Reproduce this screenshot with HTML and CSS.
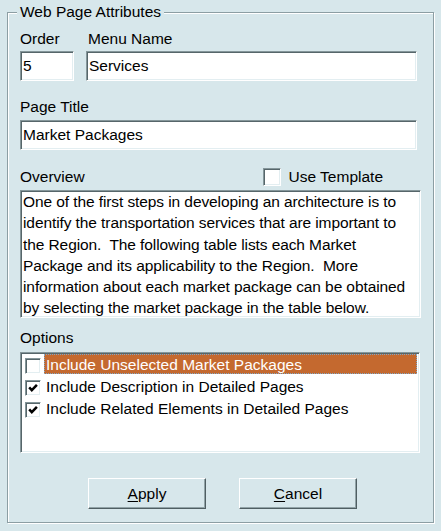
FILE: index.html
```html
<!DOCTYPE html>
<html>
<head>
<meta charset="utf-8">
<link rel="stylesheet" href="styles.css">
</head>
<body>
<div class="group">
  <div class="legend">Web Page Attributes</div>
  <div class="row1">
    <div class="col order">
      <div class="label">Order</div>
      <div class="field sunken">5</div>
    </div>
    <div class="col menu">
      <div class="label">Menu Name</div>
      <div class="field sunken">Services</div>
    </div>
  </div>
  <div class="label title-label">Page Title</div>
  <div class="field sunken title-field">Market Packages</div>
  <div class="overview-row">
    <div class="label">Overview</div>
    <div class="use-template">
      <span class="cb big sunken"></span>
      <span class="cb-label">Use Template</span>
    </div>
  </div>
  <div class="textarea sunken">One of the first steps in developing an architecture is to identify the transportation services that are important to the Region.&nbsp; The following table lists each Market Package and its applicability to the Region.&nbsp; More information about each market package can be obtained by selecting the market package in the table below.</div>
  <div class="label options-label">Options</div>
  <div class="listbox sunken">
    <div class="item">
      <span class="cb sunken"></span>
      <span class="item-text selected">Include Unselected Market Packages</span>
    </div>
    <div class="item">
      <span class="cb sunken"><svg viewBox="0 0 12 12" width="12" height="12"><path d="M2.2 5.4 L4.8 8.2 L9.9 2.9" fill="none" stroke="#000" stroke-width="2.5"/></svg></span>
      <span class="item-text">Include Description in Detailed Pages</span>
    </div>
    <div class="item">
      <span class="cb sunken"><svg viewBox="0 0 12 12" width="12" height="12"><path d="M2.2 5.4 L4.8 8.2 L9.9 2.9" fill="none" stroke="#000" stroke-width="2.5"/></svg></span>
      <span class="item-text">Include Related Elements in Detailed Pages</span>
    </div>
  </div>
  <div class="buttons">
    <div class="btn"><span><u>A</u>pply</span></div>
    <div class="btn"><span><u>C</u>ancel</span></div>
  </div>
</div>
</body>
</html>
```
FILE: styles.css
```css
html, body {
  margin: 0;
  padding: 0;
}
body {
  width: 441px;
  height: 531px;
  background: #d7e7eb;
  font-family: "Liberation Sans", Arial, sans-serif;
  font-size: 15.5px;
  color: #000;
  overflow: hidden;
}
.group {
  box-sizing: border-box;
  margin: 12px 0 0 7px;
  width: 427px;
  height: 511px;
  border: 1px solid #8c9ea3;
  box-shadow: 1px 1px 0 #ffffff, inset 1px 1px 0 #ffffff;
  padding: 0 12px;
}
.legend {
  width: max-content;
  margin: -10px 0 0 -3px;
  padding: 0 3px;
  background: #d7e7eb;
  line-height: 18px;
}
.label {
  line-height: 18px;
  white-space: nowrap;
}
.sunken {
  box-sizing: border-box;
  border: 1px solid;
  border-color: #85969a #ffffff #ffffff #85969a;
  box-shadow: inset 1px 1px 0 #56666a, inset -1px -1px 0 #e3eef1;
  background: #ffffff;
}
.row1 {
  display: flex;
  gap: 12px;
  margin-top: 9px;
}
.col .label {
  margin-bottom: 3px;
}
.order { width: 54px; }
.menu { width: 331px; }
.menu .label { padding-left: 2px; }
.field {
  height: 30px;
  line-height: 28px;
  padding-left: 2px;
}
.title-label {
  margin-top: 17px;
}
.title-field {
  margin-top: 4px;
  width: 397px;
}
.overview-row {
  display: flex;
  align-items: center;
  justify-content: space-between;
  margin-top: 18px;
  height: 18px;
}
.use-template {
  display: flex;
  align-items: center;
  gap: 8px;
  margin-right: 38px;
}
.cb {
  display: inline-flex;
  align-items: center;
  justify-content: center;
  width: 16px;
  height: 16px;
  flex: none;
}
.cb.big {
  width: 18px;
  height: 18px;
}
.cb-label {
  line-height: 18px;
}
.textarea {
  margin-top: 4px;
  width: 401px;
  height: 128px;
  padding: 0 4px 0 2px;
  line-height: 21.3px;
  letter-spacing: -0.09px;
  overflow: hidden;
}
.options-label {
  margin-top: 11px;
}
.listbox {
  margin-top: 5px;
  width: 400px;
  height: 101px;
  padding: 1px 2px 0 4px;
}
.item {
  display: flex;
  align-items: center;
  height: 22px;
}
.item .cb {
  margin-top: 1px;
}
.item-text {
  box-sizing: border-box;
  margin-left: 3px;
  padding: 0 1px;
  height: 20px;
  line-height: 20px;
  white-space: nowrap;
  border: 1px solid transparent;
  margin-top: -2px;
}
.item-text.selected {
  flex: 1;
  background: #c4692f;
  color: #ffffff;
  border: 1px dotted #7fa7c8;
}
.buttons {
  display: flex;
  gap: 33px;
  margin: 25px 0 0 68px;
}
.btn {
  box-sizing: border-box;
  width: 118px;
  height: 31px;
  display: flex;
  align-items: center;
  justify-content: center;
  border: 1px solid;
  border-color: #ffffff #4f5e62 #4f5e62 #ffffff;
  box-shadow: inset -1px -1px 0 #91a3a7;
  background: #d7e7eb;
}
.btn u {
  text-underline-offset: 2px;
}
```
